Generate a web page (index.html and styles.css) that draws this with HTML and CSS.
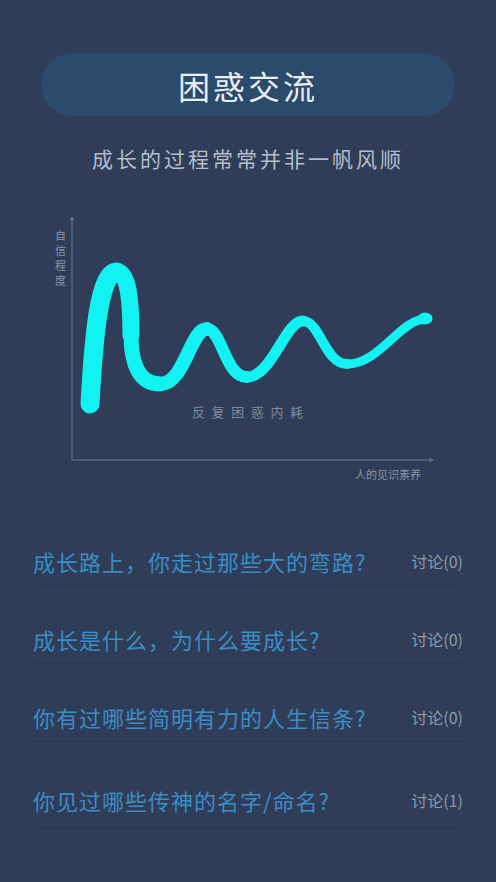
FILE: index.html
```html
<!DOCTYPE html>
<html lang="zh-CN">
<head>
<meta charset="utf-8">
<title>困惑交流</title>
<link rel="stylesheet" href="styles.css">
</head>
<body>
<div class="page">
  <div class="pill"><h1 class="title">困惑交流</h1></div>
  <p class="subtitle">成长的过程常常并非一帆风顺</p>
  <div class="chart">
    <svg class="chart-svg" width="420" height="290" viewBox="0 0 420 290">
      <g stroke="#6f7a91" stroke-width="1" fill="none">
        <line x1="32" y1="17" x2="32" y2="260"/>
        <line x1="32" y1="260" x2="393" y2="260"/>
        <polyline points="30,21 32,17 34,21"/>
        <polyline points="389,258 393,260 389,262"/>
      </g>
      <g stroke="#12f2f2" fill="none" stroke-linecap="round">
        <path d="M50,204 C54,130 60,72 77,72" stroke-width="19"/>
        <path d="M77,72 C88,72 91,100 91,135" stroke-width="17"/>
        <path d="M91,135 C91,165 100,184 120,184" stroke-width="15"/>
        <path d="M120,184 C145,184 150,129 167,129" stroke-width="14"/>
        <path d="M167,129 C182,129 185,177 207,177" stroke-width="12"/>
        <path d="M207,177 C232,177 245,121 263,121" stroke-width="11"/>
        <path d="M263,121 C280,121 285,164 307,164" stroke-width="10"/>
        <path d="M307,164 C340,164 360,119 386,119" stroke-width="9"/>
      </g>
      <ellipse cx="385" cy="118.5" rx="7.5" ry="6" fill="#12f2f2"/>
    </svg>
    <div class="ylabel">自信程度</div>
    <div class="xlabel">人的见识素养</div>
    <div class="mid-label">反复困惑内耗</div>
  </div>
  <ul class="list">
    <li class="row"><span class="q">成长路上，你走过那些大的弯路?</span><span class="count">讨论(0)</span></li>
    <li class="row"><span class="q">成长是什么，为什么要成长?</span><span class="count">讨论(0)</span></li>
    <li class="row"><span class="q">你有过哪些简明有力的人生信条?</span><span class="count">讨论(0)</span></li>
    <li class="row row-last"><span class="q">你见过哪些传神的名字/命名?</span><span class="count">讨论(1)</span></li>
  </ul>
</div>
</body>
</html>
```
FILE: styles.css
```css
html, body {
  margin: 0;
  padding: 0;
  background: #2f3d58;
}
body {
  font-family: "Noto Sans CJK SC", "Noto Sans", sans-serif;
  width: 496px;
  height: 882px;
  overflow: hidden;
}
.page {
  padding-top: 53px;
}
.pill {
  margin: 0 41px;
  height: 63px;
  border-radius: 32px;
  background: #2c4a6b;
  display: flex;
  align-items: center;
  justify-content: center;
}
.title {
  margin: 0;
  font-size: 32px;
  font-weight: 400;
  color: #e9eef3;
  letter-spacing: 3px;
  line-height: 40px;
}
.subtitle {
  margin: 27px 0 0;
  text-align: center;
  font-size: 21px;
  line-height: 30px;
  letter-spacing: 3px;
  color: #b5bccb;
}
.chart {
  position: relative;
  margin: 27px 36px 0 40px;
  height: 290px;
}
.chart-svg {
  display: block;
}
.ylabel {
  position: absolute;
  left: 15px;
  top: 28px;
  width: 12px;
  font-size: 11px;
  line-height: 15px;
  color: #8a93a8;
}
.xlabel {
  position: absolute;
  left: 315px;
  top: 266px;
  font-size: 11px;
  line-height: 16px;
  color: #8a93a8;
}
.mid-label {
  position: absolute;
  left: 152px;
  top: 202px;
  font-size: 13px;
  line-height: 20px;
  letter-spacing: 6.6px;
  color: #808a9f;
}
.list {
  list-style: none;
  margin: 18px 33px 0;
  padding: 0;
}
.row {
  display: flex;
  justify-content: space-between;
  align-items: center;
  height: 30px;
  padding: 38px 0 9px;
  border-bottom: 1px solid #2a364e;
}
.row-last {
  padding: 43px 0 12px;
}
.q {
  font-size: 22px;
  line-height: 30px;
  letter-spacing: 1px;
  color: #3b8cc4;
}
.count {
  font-size: 16px;
  line-height: 30px;
  color: #8f98ab;
}
```
